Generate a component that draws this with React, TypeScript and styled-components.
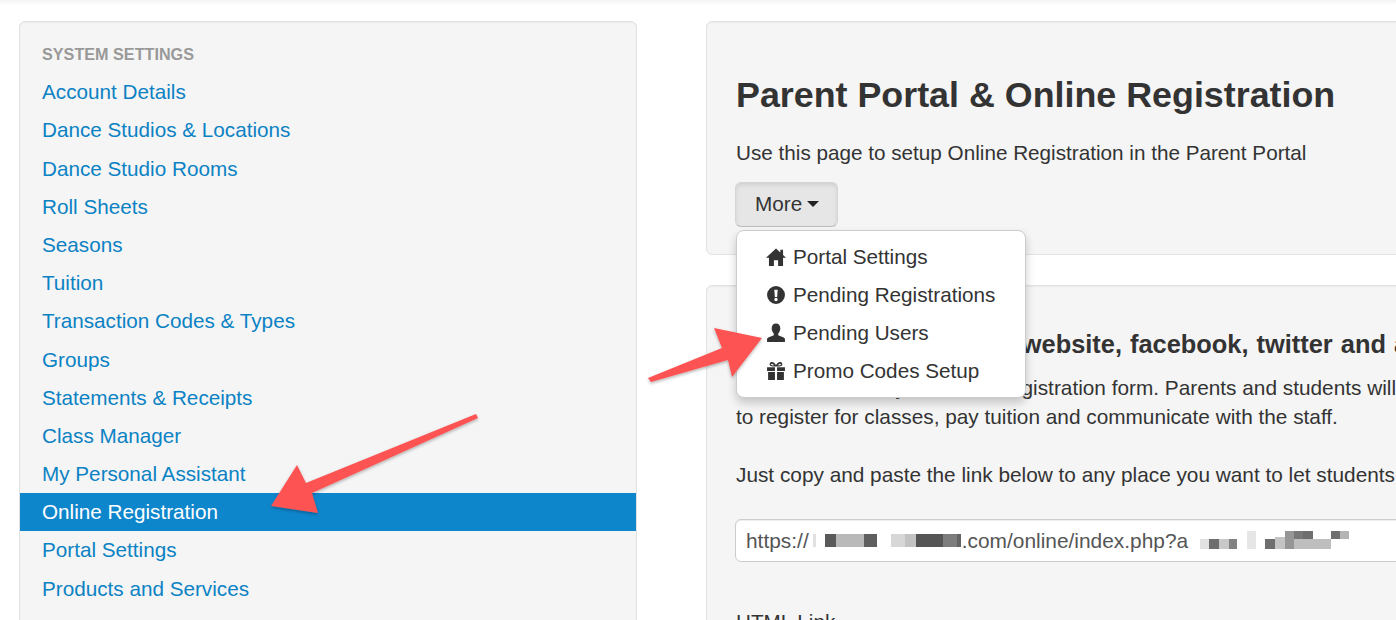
import React from 'react';
import styled, { createGlobalStyle } from 'styled-components';

const GlobalStyle = createGlobalStyle`
  html, body {
    margin: 0;
    padding: 0;
    height: 620px;
    overflow: hidden;
    background: #fff;
  }
  body {
    font-family: "Liberation Sans", Arial, sans-serif;
    color: #333;
  }
`;

const Page = styled.div`
  position: relative;
  width: 1396px;
  height: 620px;
  overflow: hidden;
  box-sizing: border-box;
  padding: 21px 0 0 19px;
  display: flex;
  align-items: flex-start;
  gap: 69px;
  &::before {
    content: '';
    position: absolute;
    top: 0;
    left: 0;
    right: 0;
    height: 5px;
    background: linear-gradient(#f4f4f4, #fff);
  }
`;

const Well = styled.div`
  box-sizing: border-box;
  background: #f5f5f5;
  border: 1px solid #e3e3e3;
  border-radius: 6px;
  box-shadow: inset 0 1px 1px rgba(0, 0, 0, 0.05);
`;

const Sidebar = styled(Well)`
  flex: 0 0 618px;
  height: 700px;
  padding: 13px 0 0;
`;

const NavHeader = styled.div`
  height: 38.2px;
  line-height: 39px;
  padding-left: 22px;
  font-size: 16.2px;
  font-weight: 700;
  color: #999;
  text-transform: uppercase;
`;

const NavItem = styled.a<{ $active?: boolean }>`
  display: block;
  height: 38.2px;
  line-height: 38px;
  padding-left: 22px;
  font-size: 20.7px;
  white-space: nowrap;
  color: ${({ $active }) => ($active ? '#fff' : '#0b82c4')};
  background: ${({ $active }) => ($active ? '#0e86cc' : 'transparent')};
`;

const Main = styled.div`
  flex: 0 0 760px;
  display: flex;
  flex-direction: column;
  gap: 30px;
`;

const HeaderWell = styled(Well)`
  height: 234px;
  padding: 0 29px;
  position: relative;
`;

const Title = styled.h1`
  margin: 0;
  padding-top: 49px;
  font-size: 35.85px;
  line-height: 48px;
  font-weight: 700;
  color: #333;
  white-space: nowrap;
`;

const Lead = styled.p`
  margin: 0;
  padding-top: 19px;
  font-size: 20.7px;
  line-height: 29px;
  white-space: nowrap;
`;

const MoreButton = styled.button`
  display: flex;
  align-items: center;
  gap: 5px;
  margin: 15px 0 0 -1px;
  box-sizing: border-box;
  width: 103px;
  height: 45px;
  padding: 0 0 2px 19px;
  font-family: inherit;
  font-size: 20.7px;
  color: #333;
  background: #e6e6e6;
  border: 1px solid #d6d6d6;
  border-bottom-color: #bdbdbd;
  border-radius: 6px;
  box-shadow: inset 0 2px 4px rgba(0, 0, 0, 0.1);
`;

const Caret = styled.span`
  width: 0;
  height: 0;
  border-left: 6px solid transparent;
  border-right: 6px solid transparent;
  border-top: 6px solid #222;
`;

const Menu = styled.div`
  position: absolute;
  z-index: 2;
  left: 29px;
  top: 208px;
  box-sizing: border-box;
  width: 290px;
  height: 168px;
  padding: 7px 0;
  background: #fff;
  border: 1px solid #ccc;
  border-radius: 8px;
  box-shadow: 0 5px 10px rgba(0, 0, 0, 0.2);
`;

const MenuItem = styled.div`
  display: flex;
  align-items: center;
  height: 38px;
  padding-left: 29px;
  gap: 7px;
  font-size: 20.7px;
  color: #333;
  white-space: nowrap;
  svg {
    flex: 0 0 20px;
    width: 20px;
    height: 20px;
    fill: #333;
  }
`;

const BodyWell = styled(Well)`
  height: 420px;
  padding: 43px 29px 0;
  overflow: hidden;
`;

const SubTitle = styled.h2`
  margin: 0 0 14px;
  font-size: 25.4px;
  word-spacing: 1px;
  line-height: 30px;
  font-weight: 700;
  white-space: nowrap;
`;

const Para = styled.p`
  margin: 0 0 29px;
  font-size: 20.8px;
  line-height: 29px;
  white-space: nowrap;
`;

const LinkField = styled.div`
  display: flex;
  align-items: center;
  box-sizing: border-box;
  width: 800px;
  height: 43px;
  margin: 30px 0 0 -1px;
  padding-left: 10px;
  font-size: 20.9px;
  color: #555;
  white-space: nowrap;
  background: #fff;
  border: 1px solid #ccc;
  border-radius: 6px;
  box-shadow: inset 0 1px 1px rgba(0, 0, 0, 0.075);
`;

const Censor = styled.svg`
  flex: none;
  display: block;
`;

const FieldLabel = styled.div`
  margin-top: 45px;
  font-size: 20.7px;
  line-height: 29px;
`;

const Arrow = styled.svg`
  position: absolute;
  z-index: 3;
  left: 0;
  top: 0;
  pointer-events: none;
  overflow: visible;
`;

const navLinks = [
  'Account Details',
  'Dance Studios & Locations',
  'Dance Studio Rooms',
  'Roll Sheets',
  'Seasons',
  'Tuition',
  'Transaction Codes & Types',
  'Groups',
  'Statements & Receipts',
  'Class Manager',
  'My Personal Assistant',
  'Online Registration',
  'Portal Settings',
  'Products and Services',
  'Messages',
];

const HomeIcon = () => (
  <svg viewBox="0 0 19 19">
    <path d="M9.5 1.5l4.1 3.7V2.5h2.6v5.1L19 10.2h-2.8V18h-4.7v-5.4h-4V18H2.8v-7.8H0z" />
  </svg>
);

const AlertIcon = () => (
  <svg viewBox="0 0 19 19">
    <path
      fillRule="evenodd"
      d="M9.5 1a8.5 8.5 0 1 1 0 17 8.5 8.5 0 0 1 0-17zM7.9 4.5l.5 6.8h2.2l.5-6.8zM9.5 12.2a1.6 1.6 0 1 0 0 3.2 1.6 1.6 0 0 0 0-3.2z"
    />
  </svg>
);

const UserIcon = () => (
  <svg viewBox="0 0 19 19">
    <path d="M9.5.5c2.6 0 4.1 1.9 4.1 4.6 0 2.1-.9 3.8-2 4.8v1.8c1.900.8 5.400 1.700 6.400 3.300v3H1v-3c1-1.600 4.500-2.500 6.400-3.300V9.900c-1.100-1-2-2.700-2-4.800C5.400 2.400 6.900.5 9.500.5z" />
  </svg>
);

const GiftIcon = () => (
  <svg viewBox="0 0 19 19">
    <path
      fillRule="evenodd"
      d="M1 6h7.5v3.500H1zM10.500 6H18v3.500h-7.500zM2 10.500h6.500V18H2zM10.500 10.500H17V18h-6.500zM9.500 5.200C8 5.400 5 5.400 3.900 4.300 2.900 3.300 3.700 1 5.500 1c1.800 0 3.300 1.700 4 3 .7-1.300 2.200-3 4-3 1.800 0 2.600 2.300 1.600 3.300-1.100 1.100-4.100 1.100-5.600.9zM5.500 2.600c-.9 0-.9 1-.3 1.300.6.300 1.800.3 2.500.2-.5-.7-1.400-1.500-2.200-1.500zM13.500 2.600c-.8 0-1.700.8-2.200 1.500.7.100 1.900.1 2.500-.2.600-.3.600-1.300-.3-1.300z"
    />
  </svg>
);

const menuItems = [
  { label: 'Portal Settings', icon: <HomeIcon /> },
  { label: 'Pending Registrations', icon: <AlertIcon /> },
  { label: 'Pending Users', icon: <UserIcon /> },
  { label: 'Promo Codes Setup', icon: <GiftIcon /> },
];

// blurred-out parts of the url: [x, y, w, h, grey]
const censorA: number[][] = [
  [4, 3, 3, 13, 225], [16, 3, 11, 13, 90], [27, 3, 28, 13, 185], [55, 3, 13, 13, 95],
  [82, 3, 14, 13, 215], [96, 3, 11, 13, 195], [107, 3, 27, 13, 85], [134, 3, 14, 13, 125],
  [148, 3, 4, 13, 100],
];
const censorB: number[][] = [
  [12, 8, 9, 10, 225], [21, 8, 10, 10, 110], [31, 8, 10, 10, 200], [41, 8, 8, 10, 130],
  [59, 0, 9, 18, 230], [77, 8, 10, 10, 110], [87, 6, 10, 12, 195], [97, 0, 9, 18, 150],
  [106, 0, 9, 8, 120], [115, 0, 10, 8, 110], [106, 8, 37, 10, 190], [143, 0, 9, 8, 110],
  [152, 0, 9, 8, 180],
];

const CensorBlock: React.FC<{ width: number; cells: number[][] }> = ({ width, cells }) => (
  <Censor width={width} height={20} viewBox={`0 0 ${width} 20`}>
    {cells.map(([x, y, w, h, g]) => (
      <rect key={`${x}-${y}`} x={x} y={y} width={w} height={h} fill={`rgb(${g},${g},${g})`} />
    ))}
  </Censor>
);

const App: React.FC = () => (
  <Page>
    <GlobalStyle />
    <Sidebar>
      <NavHeader>System Settings</NavHeader>
      {navLinks.map((link) => (
        <NavItem key={link} $active={link === 'Online Registration'}>
          {link}
        </NavItem>
      ))}
    </Sidebar>

    <Main>
      <HeaderWell>
        <Title>Parent Portal &amp; Online Registration</Title>
        <Lead>Use this page to setup Online Registration in the Parent Portal</Lead>
        <MoreButton>
          More
          <Caret />
        </MoreButton>
        <Menu>
          {menuItems.map((item) => (
            <MenuItem key={item.label}>
              {item.icon}
              {item.label}
            </MenuItem>
          ))}
        </Menu>
      </HeaderWell>

      <BodyWell>
        <SubTitle>Share this link on your website, facebook, twitter and anywhere else</SubTitle>
        <Para>
          Share this link to your online registration form. Parents and students will be able
          <br />
          to register for classes, pay tuition and communicate with the staff.
        </Para>
        <Para>Just copy and paste the link below to any place you want to let students register.</Para>
        <LinkField>
          https://
          <CensorBlock width={153} cells={censorA} />
          .com/online/index.php?a
          <CensorBlock width={165} cells={censorB} />
        </LinkField>
        <FieldLabel>HTML Link</FieldLabel>
      </BodyWell>
    </Main>

    <Arrow width="1396" height="620" viewBox="0 0 1396 620">
      <defs>
        <filter id="arrowShadow" x="-10%" y="-10%" width="120%" height="130%">
          <feDropShadow dx="0" dy="1.5" stdDeviation="1.5" floodColor="#000" floodOpacity="0.3" />
        </filter>
      </defs>
      <g fill="#fd5353" filter="url(#arrowShadow)">
        <polygon points="271,506 297,465 306,483 476,414 478,418 312,493 318,513" />
        <polygon points="762,338 714,328 722,348 648,378 651,382 728,360 732,377" />
      </g>
    </Arrow>
  </Page>
);

export default App;
